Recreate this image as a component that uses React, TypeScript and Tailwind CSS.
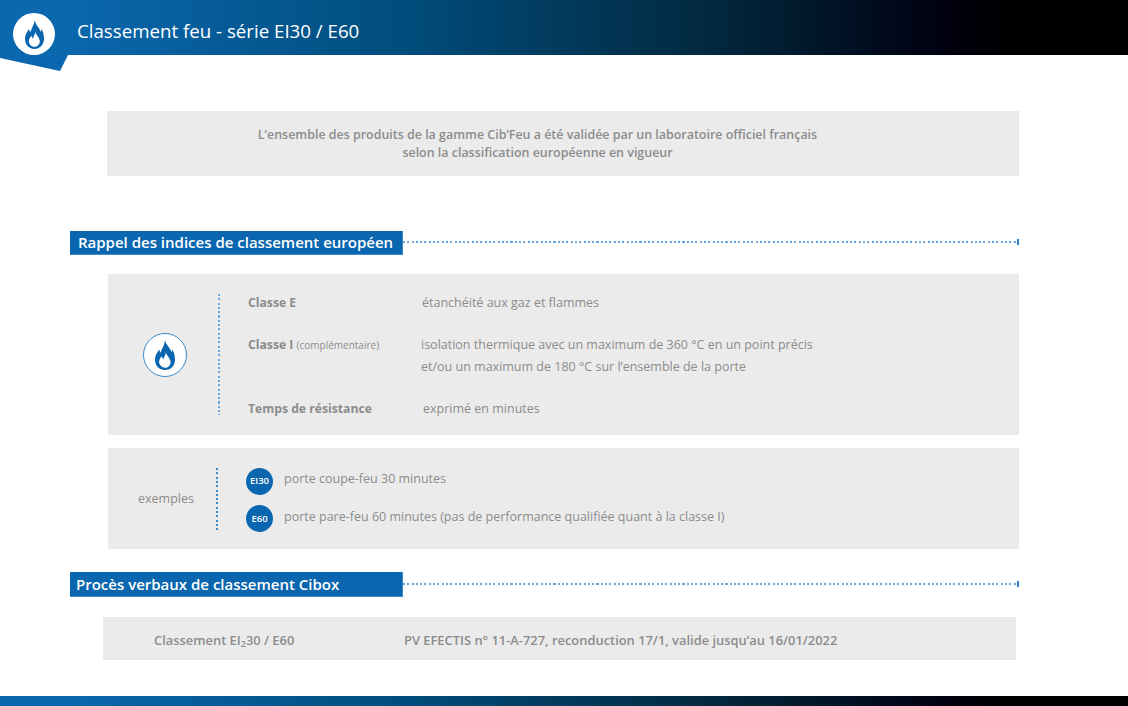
import React from "react";

const Flame = ({ className }: { className: string }) => (
  <svg viewBox="0 0 24 32" preserveAspectRatio="none" className={className}>
    <path
      fill="#0a66ae"
      d="M12 0C13 5 18 8 20 13C20.500 12 21 11 20.500 9.500C23 13 24 17 24 21C24 27.500 18.500 32 12 32C5.500 32 0 27.500 0 21C0 16 3 13 5 10C5.500 11.500 6 12.500 7 13.500C8 9 12 5 12 0Z"
    />
    <path
      fill="#fff"
      d="M13 13C13.500 16 17 18 18.500 22C19.500 26 16.500 29.500 12 29.500C7.500 29.500 4.500 26 5 22.500C5.500 20 7 18.500 8 17C8.300 18.500 9 19.500 10 20.500C10.500 18 13 16 13 13Z"
    />
  </svg>
);

const DottedH = () => (
  <div className="flex-1 flex items-center">
    <div className="flex-1 h-[2px] mt-[-2px] bg-[repeating-linear-gradient(90deg,#6aa6d8_0,#6aa6d8_2px,transparent_2px,transparent_4.3px)]" />
    <div className="w-[2px] h-[6px] mt-[-2px] bg-[#2f7fc0]" />
  </div>
);

const SectionTitle = ({ title, className }: { title: string; className: string }) => (
  <div className="flex w-[949px] ml-[70px]">
    <div className={`w-[333px] bg-[#0a66ae] border-r border-b border-[#3d8bc9] text-white text-[15px] font-semibold whitespace-nowrap ${className}`}>
      {title}
    </div>
    <DottedH />
  </div>
);

const App = () => {
  return (
    <div className="relative w-[1128px] h-[706px] overflow-hidden bg-white flex flex-col font-['Open_Sans','Noto_Sans',sans-serif] text-[#8c8c8c]">
      {/* Header */}
      <header className="h-[55px] shrink-0 flex items-center pl-[77px] pt-[7px] bg-[linear-gradient(90deg,#0a68af_5%,#014d7c_36%,#022a41_62%,#00000f_84%,#000_90%)]">
        <span className="text-white text-[18.7px] leading-[26px]">Classement feu - série EI30 / E60</span>
      </header>

      {/* Header tab + logo */}
      <svg viewBox="0 0 68 17" className="absolute left-0 top-[55px] w-[68px] h-[17px]">
        <path d="M0 0h68l-8 16L0 3Z" fill="#0a66ae" />
      </svg>
      <div className="absolute left-[13px] top-[13px] w-[42px] h-[42px] rounded-full bg-white flex items-center justify-center">
        <Flame className="w-[19px] h-[29px] mt-[1px]" />
      </div>

      {/* Intro */}
      <div className="mt-[56px] ml-[107px] w-[912px] h-[65px] bg-[#ebebeb] flex flex-col items-center justify-center pr-[51px] text-[12.45px] leading-[18px] font-semibold">
        <p>L’ensemble des produits de la gamme Cib’Feu a été validée par un laboratoire officiel français</p>
        <p>selon la classification européenne en vigueur</p>
      </div>

      <div className="mt-[55px]">
        <SectionTitle title="Rappel des indices de classement européen" className="h-[24px] pl-[8px] leading-[23px]" />
      </div>

      {/* Classes */}
      <div className="mt-[19px] ml-[108px] w-[911px] h-[161px] bg-[#ebebeb] flex items-center">
        <div className="w-[110px] flex justify-center pl-[4px]">
          <div className="w-[44px] h-[44px] rounded-full bg-white border border-[#3d8bc9] flex items-center justify-center">
            <Flame className="w-[20px] h-[30px]" />
          </div>
        </div>
        <div className="h-[121px] w-[2px] bg-[repeating-linear-gradient(180deg,#6aa6d8_0,#6aa6d8_2px,transparent_2px,transparent_4.3px)]" />
        <div className="ml-[28px] mt-[2px] flex flex-col text-[12.5px] leading-[20px]">
          <div className="flex h-[42px]">
            <span className="w-[174px] font-bold text-[12.2px]">Classe E</span>
            <span>étanchéité aux gaz et flammes</span>
          </div>
          <div className="flex h-[64px]">
            <span className="w-[173px] font-bold text-[12.2px] whitespace-nowrap">
              Classe I <span className="font-normal text-[10px]">(complémentaire)</span>
            </span>
            <span className="leading-[22px] mt-[-1px]">
              isolation thermique avec un maximum de 360 °C en un point précis
              <br />
              et/ou un maximum de 180 °C sur l’ensemble de la porte
            </span>
          </div>
          <div className="flex">
            <span className="w-[175px] font-bold text-[12.2px]">Temps de résistance</span>
            <span>exprimé en minutes</span>
          </div>
        </div>
      </div>

      {/* Exemples */}
      <div className="mt-[13px] ml-[108px] w-[911px] h-[101px] bg-[#ebebeb] flex items-center text-[12.5px]">
        <div className="w-[108px] pl-[30px] mt-[2px]">exemples</div>
        <div className="h-[63px] w-[2px] mt-[2px] bg-[repeating-linear-gradient(180deg,#3d8bc9_0,#3d8bc9_2px,transparent_2px,transparent_4.3px)]" />
        <div className="ml-[28px] mt-[3px] flex flex-col gap-[10.5px]">
          {[
            { code: "EI30", text: "porte coupe-feu 30 minutes" },
            { code: "E60", text: "porte pare-feu 60 minutes (pas de performance qualifiée quant à la classe I)" },
          ].map((row) => (
            <div key={row.code} className="flex items-center">
              <span className="w-[27px] h-[27px] rounded-full bg-[#0a66ae] text-white text-[9.5px] font-semibold flex items-center justify-center">
                {row.code}
              </span>
              <span className="ml-[11px] mt-[-3px]">{row.text}</span>
            </div>
          ))}
        </div>
      </div>

      <div className="mt-[23px]">
        <SectionTitle title="Procès verbaux de classement Cibox" className="h-[25px] pl-[6px] leading-[24px]" />
      </div>

      {/* PV */}
      <div className="mt-[20px] ml-[103px] w-[913px] h-[43px] bg-[#ebebeb] flex items-center pt-[4px] text-[12.9px] font-semibold">
        <span className="w-[250px] ml-[51px]">
          Classement EI<sub className="text-[9px]">2</sub>30 / E60
        </span>
        <span>PV EFECTIS n° 11-A-727, reconduction 17/1, valide jusqu’au 16/01/2022</span>
      </div>

      {/* Footer bar */}
      <footer className="mt-auto h-[10px] shrink-0 bg-[linear-gradient(90deg,#0a68af_5%,#014d7c_36%,#022a41_62%,#00000f_84%,#000_90%)]" />
    </div>
  );
};

export default App;
